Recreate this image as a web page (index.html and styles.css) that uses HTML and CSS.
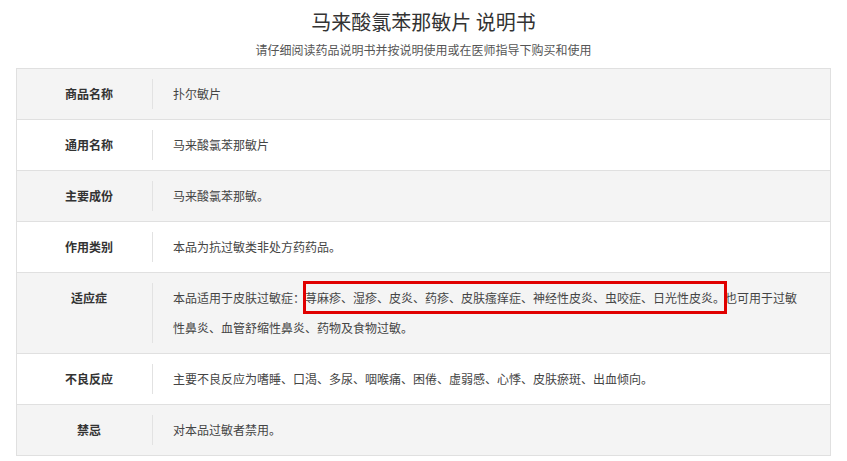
FILE: index.html
```html
<!doctype html>
<html lang="zh-CN">
    <head>
        <meta charset="UTF-8" />
        <meta name="viewport" content="width=device-width, initial-scale=1.0" />
        <title>马来酸氯苯那敏片 说明书</title>
        <link rel="stylesheet" href="styles.css">
    </head>
    <body>
        <div class="header">
            <h1>马来酸氯苯那敏片 说明书</h1>
            <p class="tip">请仔细阅读药品说明书并按说明使用或在医师指导下购买和使用</p>
        </div>
        <div class="manual">
            <div class="row">
                <div class="label">商品名称</div>
                <div class="value">扑尔敏片</div>
            </div>
            <div class="row">
                <div class="label">通用名称</div>
                <div class="value">马来酸氯苯那敏片</div>
            </div>
            <div class="row">
                <div class="label">主要成份</div>
                <div class="value">马来酸氯苯那敏。</div>
            </div>
            <div class="row">
                <div class="label">作用类别</div>
                <div class="value">本品为抗过敏类非处方药药品。</div>
            </div>
            <div class="row">
                <div class="label">适应症</div>
                <div class="value">本品适用于皮肤过敏症：<span class="mark">荨麻疹、湿疹、皮炎、药疹、皮肤瘙痒症、神经性皮炎、虫咬症、日光性皮炎。</span>也可用于过敏性鼻炎、血管舒缩性鼻炎、药物及食物过敏。</div>
            </div>
            <div class="row">
                <div class="label">不良反应</div>
                <div class="value">主要不良反应为嗜睡、口渴、多尿、咽喉痛、困倦、虚弱感、心悸、皮肤瘀斑、出血倾向。</div>
            </div>
            <div class="row">
                <div class="label">禁忌</div>
                <div class="value">对本品过敏者禁用。</div>
            </div>
        </div>
    </body>
</html>
```

FILE: styles.css
```css
body {
    margin: 0;
    padding: 0 16px;
    font-family: "Noto Sans CJK SC", "Liberation Sans", sans-serif;
    background-color: #ffffff;
    color: #333;
}
.header {
    text-align: center;
    margin-bottom: 8px;
}
.header h1 {
    margin: 7px 0 0;
    font-size: 20px;
    line-height: 30px;
    font-weight: normal;
    color: #333;
}
.header .tip {
    margin: 3px 0 0;
    font-size: 12px;
    line-height: 20px;
    color: #555;
}
.manual {
    border: 1px solid #e0e0e0;
    border-bottom: none;
}
.row {
    display: flex;
    align-items: flex-start;
    padding: 10px 0;
    border-bottom: 1px solid #e0e0e0;
    font-size: 12px;
    line-height: 30px;
}
.row:nth-child(odd) {
    background-color: #f4f4f4;
}
.label {
    flex: 0 0 126px;
    padding-left: 9px;
    align-self: stretch;
    text-align: center;
    font-weight: bold;
    color: #333;
    border-right: 1px solid #e2e2e2;
}
.value {
    flex: 1;
    padding: 0 32px 0 20px;
    color: #444;
}
.mark {
    padding: 6px 0;
    outline: 3px solid #e00000;
    outline-offset: -1px;
}
```
